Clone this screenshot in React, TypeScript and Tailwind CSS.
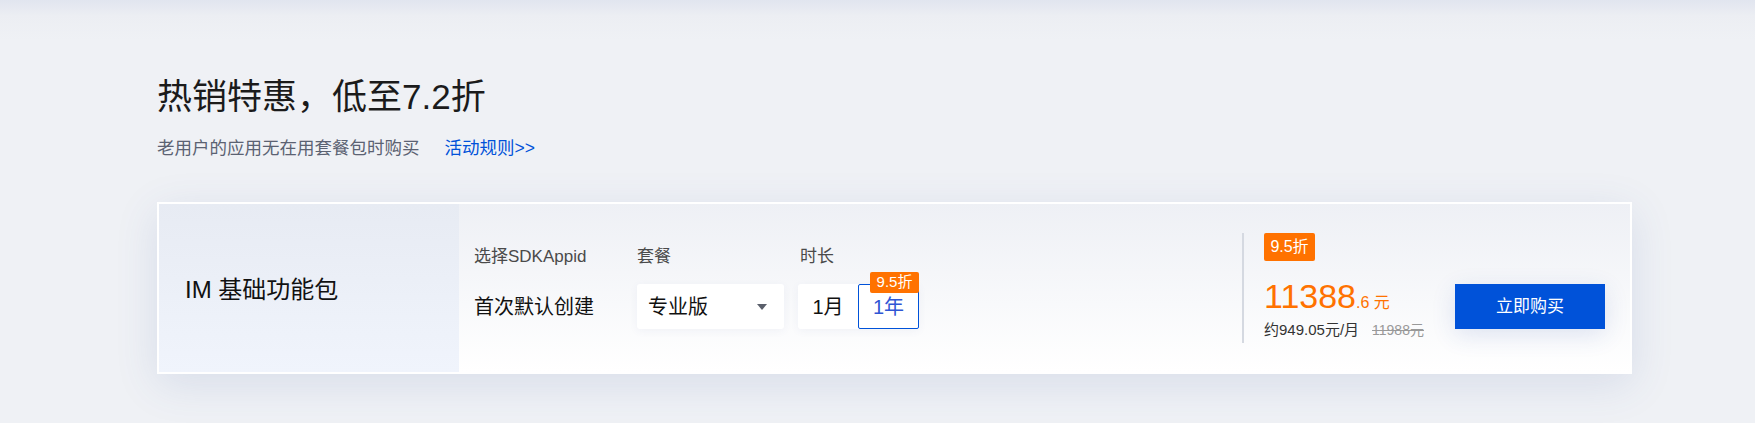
export default function App() {
  return (
    <div className="min-h-[423px] w-full bg-[linear-gradient(180deg,#e1e5ef_0px,#eceef3_16px,#eff1f5_40px,#eff1f5_100%)] font-['Liberation_Sans','Noto_Sans_CJK_SC',sans-serif]">
      <div className="ml-[157px] w-[1475px] pt-[74px]">
        {/* Heading */}
        <h1 className="text-[35px] leading-[46px] text-[#1b1b1b]">热销特惠，低至7.2折</h1>
        <div className="mt-[16px] flex items-center text-[17.5px] leading-[24px]">
          <span className="text-[#5b6272]">老用户的应用无在用套餐包时购买</span>
          <a className="ml-[25px] text-[#0052d9]">活动规则&gt;&gt;</a>
        </div>

        {/* Package card */}
        <div className="mt-[42px] flex h-[172px] border-2 border-white bg-[linear-gradient(180deg,#eef0f5_0%,#ffffff_100%)] shadow-[0_10px_40px_rgba(60,90,160,0.13)]">
          <div className="flex w-[300px] items-center bg-[linear-gradient(180deg,#e7ebf3_0%,#f0f4fc_100%)] pl-[26px] pt-[4px]">
            <span className="text-[24px] text-[#111]">IM 基础功能包</span>
          </div>

          <div className="flex flex-1 items-start pl-[15px] pt-[41px]">
            <div className="flex w-[163px] flex-col">
              <span className="text-[17px] leading-[24px] text-[#4a4a4a]">选择SDKAppid</span>
              <div className="mt-[15px] flex h-[45px] items-center text-[20px] text-[#111]">首次默认创建</div>
            </div>

            <div className="flex w-[161px] flex-col">
              <span className="text-[17px] leading-[24px] text-[#4a4a4a]">套餐</span>
              <div className="mt-[15px] flex h-[45px] w-[147px] items-center justify-between rounded-[3px] bg-white pl-[11px] pr-[17px] shadow-[0_2px_8px_rgba(60,90,160,0.06)]">
                <span className="text-[20px] text-[#111]">专业版</span>
                <svg width="10" height="6" viewBox="0 0 10 6">
                  <path d="M0 0 L10 0 L5 6 Z" fill="#5a5f6b" />
                </svg>
              </div>
            </div>

            <div className="flex flex-col">
              <span className="pl-[2px] text-[17px] leading-[24px] text-[#4a4a4a]">时长</span>
              <div className="mt-[15px] flex h-[45px] rounded-[3px] bg-white shadow-[0_2px_8px_rgba(60,90,160,0.06)]">
                <div className="flex w-[60px] items-center justify-center text-[20px] text-[#111]">1月</div>
                <div className="relative flex w-[61px] items-center justify-center rounded-[2px] border border-[#0052d9] text-[20px] text-[#2f56d4]">
                  1年
                  <span className="absolute right-[-1px] top-[-13px] flex h-[21px] w-[49px] items-center justify-center rounded-[2px] bg-[#ff7200] text-[15px] text-white">
                    9.5折
                  </span>
                </div>
              </div>
            </div>
          </div>

          <div className="flex items-center pr-[25px]">
            <div className="h-[110px] w-[2px] bg-[#d5d9e1]" />
            <div className="ml-[20px] flex w-[191px] flex-col items-start">
              <span className="flex h-[28px] w-[51px] items-center justify-center rounded-[2px] bg-[#ff7200] text-[16px] text-white">
                9.5折
              </span>
              <div className="mt-[18px] flex items-baseline text-[#ff7200]">
                <span className="text-[34px] leading-[34px]">11388</span>
                <span className="text-[16px]">.6 元</span>
              </div>
              <div className="mb-[2px] mt-[4px] flex items-baseline">
                <span className="text-[15px] text-[#333]">约949.05元/月</span>
                <span className="ml-[13px] text-[14px] text-[#999] line-through">11988元</span>
              </div>
            </div>
            <button className="mt-[37px] flex h-[45px] w-[150px] items-center justify-center bg-[#0052d9] text-[17px] text-white shadow-[0_6px_24px_rgba(40,80,170,0.14)]">
              立即购买
            </button>
          </div>
        </div>
      </div>
    </div>
  );
}
